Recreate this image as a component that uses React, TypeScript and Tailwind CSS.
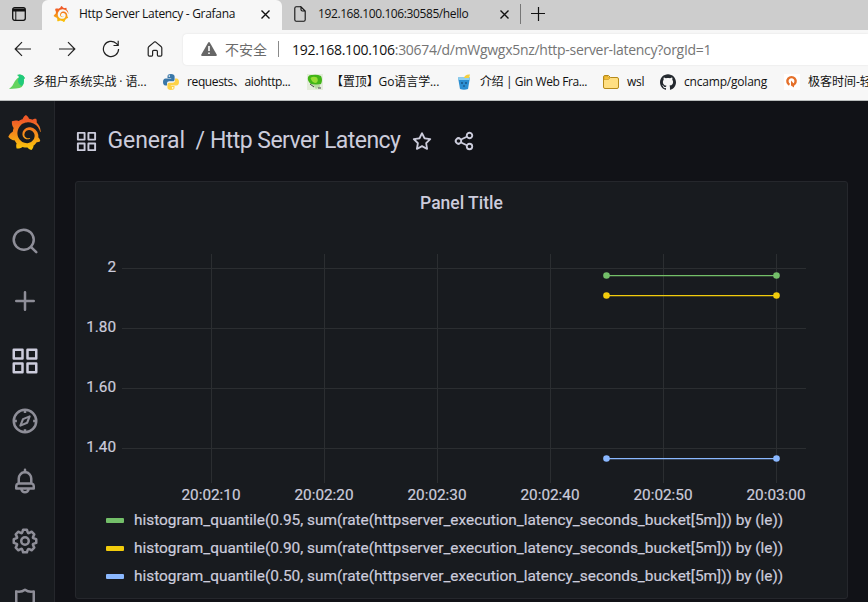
import React from "react";
import { SiGrafana, SiGithub } from "react-icons/si";

const PATHS = {
  search:
    "M21.71,20.29,18,16.61A9,9,0,1,0,16.61,18l3.68,3.68a1,1,0,0,0,1.42,0A1,1,0,0,0,21.71,20.29ZM11,18a7,7,0,1,1,7-7A7,7,0,0,1,11,18Z",
  plus: "M19,11H13V5a1,1,0,0,0-2,0v6H5a1,1,0,0,0,0,2h6v6a1,1,0,0,0,2,0V13h6a1,1,0,0,0,0-2Z",
  apps: "M10,13H3a1,1,0,0,0-1,1v7a1,1,0,0,0,1,1h7a1,1,0,0,0,1-1V14A1,1,0,0,0,10,13ZM9,20H4V15H9ZM21,2H14a1,1,0,0,0-1,1v7a1,1,0,0,0,1,1h7a1,1,0,0,0,1-1V3A1,1,0,0,0,21,2ZM20,9H15V4h5Zm1,4H14a1,1,0,0,0-1,1v7a1,1,0,0,0,1,1h7a1,1,0,0,0,1-1V14A1,1,0,0,0,21,13Zm-1,7H15V15h5ZM10,2H3A1,1,0,0,0,2,3v7a1,1,0,0,0,1,1h7a1,1,0,0,0,1-1V3A1,1,0,0,0,10,2ZM9,9H4V4H9Z",
  bell: "M18,13.18V10a6,6,0,0,0-5-5.91V3a1,1,0,0,0-2,0V4.09A6,6,0,0,0,6,10v3.18A3,3,0,0,0,4,16v2a1,1,0,0,0,1,1H8.14a4,4,0,0,0,7.72,0H19a1,1,0,0,0,1-1V16A3,3,0,0,0,18,13.18ZM8,10a4,4,0,0,1,8,0v3H8Zm4,10a2,2,0,0,1-1.72-1h3.44A2,2,0,0,1,12,20Zm6-3H6V16a1,1,0,0,1,1-1H17a1,1,0,0,1,1,1Z",
  cog: "M21.32,9.55l-1.89-.63.89-1.78A1,1,0,0,0,20.13,6L18,3.87a1,1,0,0,0-1.15-.19l-1.78.89-.63-1.89A1,1,0,0,0,13.5,2h-3a1,1,0,0,0-.95.68L8.92,4.57,7.14,3.68A1,1,0,0,0,6,3.87L3.87,6a1,1,0,0,0-.19,1.15l.89,1.78-1.89.63A1,1,0,0,0,2,10.5v3a1,1,0,0,0,.68.95l1.89.63-.89,1.78A1,1,0,0,0,3.87,18L6,20.13a1,1,0,0,0,1.15.19l1.78-.89.63,1.89a1,1,0,0,0,.95.68h3a1,1,0,0,0,.95-.68l.63-1.89,1.78.89A1,1,0,0,0,18,20.13L20.13,18a1,1,0,0,0,.19-1.15l-.89-1.78,1.89-.63A1,1,0,0,0,22,13.5v-3A1,1,0,0,0,21.32,9.55ZM20,12.78l-1.2.4A2,2,0,0,0,17.64,16l.57,1.14-1.1,1.1L16,17.64a2,2,0,0,0-2.79,1.16l-.4,1.2H11.22l-.4-1.2A2,2,0,0,0,8,17.64l-1.14.57-1.1-1.1L6.36,16A2,2,0,0,0,5.2,13.18L4,12.78V11.22l1.2-.4A2,2,0,0,0,6.36,8L5.79,6.89l1.1-1.1L8,6.36A2,2,0,0,0,10.82,5.2l.4-1.2h1.56l.4,1.2A2,2,0,0,0,16,6.36l1.14-.57,1.1,1.1L17.64,8a2,2,0,0,0,1.16,2.79l1.2.4ZM12,8a4,4,0,1,0,4,4A4,4,0,0,0,12,8Zm0,6a2,2,0,1,1,2-2A2,2,0,0,1,12,14Z",
  star: "M22,9.67A1,1,0,0,0,21.14,9l-5.69-.83L12.9,3a1,1,0,0,0-1.8,0L8.55,8.16,2.86,9a1,1,0,0,0-.81.68,1,1,0,0,0,.25,1l4.13,4-1,5.68A1,1,0,0,0,6.9,21.44L12,18.77l5.1,2.67a.93.93,0,0,0,.46.12,1,1,0,0,0,.59-.19,1,1,0,0,0,.4-1l-1-5.68,4.13-4A1,1,0,0,0,22,9.67Zm-6.15,4a1,1,0,0,0-.29.88l.72,4.19-3.76-2a1,1,0,0,0-.94,0l-3.76,2,.72-4.19a1,1,0,0,0-.29-.88l-3-3,4.21-.61a1,1,0,0,0,.76-.55L12,5.7l1.88,3.82a1,1,0,0,0,.76.55l4.21.61Z",
  share:
    "M18,14a4,4,0,0,0-3.08,1.48l-5.1-2.35a3.64,3.64,0,0,0,0-2.26l5.1-2.35A4,4,0,1,0,14,6a4.17,4.17,0,0,0,.07.71L8.79,9.14a4,4,0,1,0,0,5.72l5.28,2.43A4.17,4.17,0,0,0,14,18a4,4,0,1,0,4-4ZM18,4a2,2,0,1,1-2,2A2,2,0,0,1,18,4ZM6,14a2,2,0,1,1,2-2A2,2,0,0,1,6,14Zm12,6a2,2,0,1,1,2-2A2,2,0,0,1,18,20Z",
};

function Glyph({ d, className }: { d: string; className: string }) {
  return (
    <svg viewBox="0 0 24 24" className={`shrink-0 ${className}`} fill="currentColor">
      <path d={d} />
    </svg>
  );
}

function GrafanaLogo({ className }: { className: string }) {
  return <SiGrafana className={`shrink-0 ${className}`} fill="url(#grafana-flame)" />;
}

function TabStrip() {
  return (
    <div className="flex h-[30px] bg-[#cdcdcd] text-[12px]">
      <div className="flex w-[42px] items-center justify-center rounded-br bg-[#cdcdcd] pr-1 pb-[2px]">
        <svg width="14" height="14" viewBox="0 0 14 14" fill="none" stroke="#111">
          <rect x="0.7" y="0.7" width="12.6" height="12.6" rx="2" strokeWidth="1.3" />
          <path d="M1 2.2h12M1 3.7h12" strokeWidth="1.6" />
          <path d="M3.8 4v9" strokeWidth="1" />
        </svg>
      </div>
      <div className="flex w-[240px] items-center rounded-t-md bg-[#f7f7f7] pl-[11px] pb-[2px]">
        <GrafanaLogo className="size-4" />
        <span className="ml-[10px] w-[182px] whitespace-nowrap tracking-[-0.31px]">Http Server Latency - Grafana</span>
        <svg width="9" height="9" viewBox="0 0 9 9" stroke="#111" strokeWidth="1.4">
          <path d="M.5.5l8 8M8.500.5l-8 8" />
        </svg>
      </div>
      <div className="flex w-[238px] items-center pl-[12px] pb-[2px]">
        <svg width="12" height="16" viewBox="0 0 12 16" fill="none" stroke="#111" strokeWidth="1.1">
          <path d="M7 .8H2.200Q.8.800.8 2.200V13.800Q.8 15.200 2.200 15.200H9.800Q11.200 15.200 11.200 13.800V5L7 .8V3.600Q7 5 8.400 5H11.200" />
        </svg>
        <span className="ml-3 w-[182px] whitespace-nowrap tracking-[-0.4px]">192.168.100.106:30585/hello</span>
        <svg width="9" height="9" viewBox="0 0 9 9" stroke="#111" strokeWidth="1.4">
          <path d="M.5.5l8 8M8.500.5l-8 8" />
        </svg>
      </div>
      <div className="mt-1 h-[20px] w-px bg-[#777]" />
      <svg width="14" height="14" viewBox="0 0 14 14" className="mt-[7px] ml-[10px]" stroke="#111" strokeWidth="1.2">
        <path d="M7.500 0v14M0 6.500h14" />
      </svg>
    </div>
  );
}

function AddressBar() {
  return (
    <div className="flex h-[38px] items-center">
      <div className="flex w-[183px] items-center pl-[14px]">
        <svg width="18" height="16" viewBox="0 0 18 16" fill="none" stroke="#222" strokeWidth="1.2">
          <path d="M17 8H1.500M8 1.200L1.200 8L8 14.800" />
        </svg>
        <svg width="18" height="16" viewBox="0 0 18 16" className="ml-[26px]" fill="none" stroke="#222" strokeWidth="1.2">
          <path d="M1 8H16.500M10 1.200L16.800 8L10 14.800" />
        </svg>
        <svg width="18" height="18" viewBox="0 0 18 18" className="ml-[26px]" fill="none" stroke="#222" strokeWidth="1.2">
          <path d="M16.600 9A7.600 7.600 0 1 1 14.200 3.400L16 5.200M16.200 .8V5.500H11.500" />
        </svg>
        <svg width="16" height="16" viewBox="0 0 16 16" className="ml-[27px]" fill="none" stroke="#222" strokeWidth="1.200">
          <path d="M1.200 7Q1.200 6.300 1.700 5.800L7.200 1.100Q8 .5 8.800 1.100L14.300 5.800Q14.800 6.300 14.800 7V14Q14.800 15.200 13.600 15.200H11.400Q10.400 15.200 10.400 14V10.400Q10.400 9.400 9.400 9.400H6.600Q5.600 9.400 5.600 10.400V14Q5.600 15.200 4.600 15.200H2.400Q1.200 15.200 1.200 14Z" />
        </svg>
      </div>
      <div className="flex h-[31px] flex-1 items-center rounded-l-[4px] bg-white pl-[18px] shadow-[0_0_2px_#ddd]">
        <svg width="16" height="14" viewBox="0 0 16 14">
          <path d="M7.200.6Q8-.4 8.800.6L15.800 12.700Q16 14 15 14H1Q0 14 .2 12.700Z" fill="#666" />
          <path d="M8 4v5M8 10.500v1.500" stroke="#fff" strokeWidth="1.600" />
        </svg>
        <span className="ml-2 w-[53px] whitespace-nowrap text-[14px] text-[#6b6b6b]">不安全</span>
        <div className="h-4 w-px bg-[#8a8a8a]" />
        <span className="ml-[13px] whitespace-nowrap text-[14px] tracking-[-0.29px] text-[#757575]">
          <span className="text-[#111]">192.168.100.106</span>:30674/d/mWgwgx5nz/http-server-latency?orgId=1
        </span>
      </div>
    </div>
  );
}

function Bookmark({ icon, label, width, track }: { icon: React.ReactNode; label: string; width: string; track: string }) {
  return (
    <div className={`flex shrink-0 items-center ${width}`}>
      <div className="flex w-4 shrink-0 justify-center">{icon}</div>
      <span className={`ml-2 whitespace-nowrap ${track}`}>{label}</span>
    </div>
  );
}

function Bookmarks() {
  return (
    <div className="flex h-8 items-center overflow-hidden border-b border-[#b9bcbc] pb-[5px] pl-[9px] text-[12px] text-[#111]">
      <Bookmark
        width="w-[154px]"
        track="tracking-[-0.1px]"
        label="多租户系统实战 · 语..."
        icon={
          <svg width="16" height="16" viewBox="0 0 16 16">
            <path d="M0 15Q4 12 6 7Q8 4 10.500 3Q9 1 8 1Q12-.5 14.500 2L15.800 4L14.800 5.500Q16 14 7 14.500Z" fill="#64d35e" />
            <path d="M10 3Q9 1 8 1Q12-.5 14.500 2L15.800 4L14.800 5.500Q15.500 9 13 12Q7 9 10 3Z" fill="#20ca7c" />
          </svg>
        }
      />
      <Bookmark
        width="w-[144px]"
        track="tracking-[-0.37px]"
        label="requests、aiohttp..."
        icon={
          <svg width="16" height="16" viewBox="0 0 16 16">
            <path d="M8 0C5 0 4.500 1.200 4.500 2.400V4H8.200V4.600H2.500C1 4.600 0 5.800 0 8S1 11.500 2.300 11.500H4V9.500C4 8.200 5 7.300 6.200 7.300H9.800C11 7.300 11.600 6.500 11.600 5.400V2.400C11.600 1 10.400 0 8 0Z" fill="#3a77a8" />
            <path d="M8 16c3 0 3.500-1.200 3.500-2.400V12H7.800v-.6h5.700C15 11.400 16 10.200 16 8S15 4.500 13.700 4.500H12v2c0 1.300-1 2.200-2.200 2.200H6.200C5 8.700 4.400 9.500 4.400 10.600v3C4.400 15 5.600 16 8 16Z" fill="#fdd247" />
            <circle cx="6.300" cy="2.100" r=".8" fill="#fff" />
            <circle cx="9.700" cy="13.900" r=".8" fill="#fff" />
          </svg>
        }
      />
      <Bookmark
        width="w-[149px]"
        track="tracking-[-0.1px]"
        label="【置顶】Go语言学..."
        icon={
          <svg width="16" height="16" viewBox="0 0 16 16">
            <rect width="16" height="16" fill="#e4ecdc" />
            <path d="M1 3Q2 .5 5 1Q10 0 14 2Q16 6 14 10Q9 12 4 10Q0 7 1 3Z" fill="#42b518" />
            <path d="M3.500 4Q6 2 10 3.500Q12 7 9 9Q5 9 3.500 4Z" fill="#97dd35" />
            <path d="M5 10.500h8v2.500L9 15Z" fill="#b9d9a4" />
            <path d="M3 10l4 3M11 14h3" stroke="#444" />
          </svg>
        }
      />
      <Bookmark
        width="w-[147px]"
        track="tracking-[-0.4px]"
        label="介绍 | Gin Web Fra..."
        icon={
          <svg width="14" height="16" viewBox="0 0 14 16">
            <path d="M1 3.500H13L11 15Q7 16.500 3 15Z" fill="#2c8fd2" />
            <path d="M1 3.500H13L12.600 6H1.400Z" fill="#8fd0ee" />
            <path d="M7 4Q8 0 13 .5L12 4Z" fill="#f4cf3e" />
            <path d="M5 8v2M9 8v2M6 12h2" stroke="#174a75" strokeWidth="1.200" />
          </svg>
        }
      />
      <Bookmark
        width="w-[57px]"
        track="tracking-[-0.3px]"
        label="wsl"
        icon={
          <svg width="16" height="14" viewBox="0 0 16 14">
            <path d="M.5 2Q.5.500 2 .5H5.500L7.500 2.500H14Q15.500 2.500 15.500 4V12Q15.500 13.500 14 13.500H2Q.5 13.500.5 12Z" fill="#ffdf82" stroke="#b68a1a" />
            <path d="M1 4.500H5.500L7.500 2.500H5.500L4.500 1H2Q1 1 1 2Z" fill="#f4bd35" stroke="#b68a1a" strokeWidth=".5" />
          </svg>
        }
      />
      <Bookmark width="w-[124px]" track="tracking-[-0.2px]" label="cncamp/golang" icon={<SiGithub className="size-4 text-[#24292f]" />} />
      <Bookmark
        width="w-[90px]"
        track="tracking-[0px]"
        label="极客时间-轻"
        icon={
          <svg width="16" height="16" viewBox="0 0 16 16">
            <rect width="16" height="16" fill="#fff" />
            <path d="M5.500 10.800A4.100 4.100 0 1 1 9.500 10.800" fill="none" stroke="#e5702a" strokeWidth="2.400" />
            <path d="M7 6.500V11.500L10 13.500V10Z" fill="#e5702a" />
          </svg>
        }
      />
    </div>
  );
}

function Sidebar() {
  const cell = "flex h-[60px] shrink-0 items-center justify-center";
  return (
    <nav className="flex w-[55px] shrink-0 flex-col overflow-hidden border-r border-[#25272c] bg-[#181b1f] pr-1 text-[#8e8e98]">
      <div className="flex h-[110px] shrink-0 justify-center pt-[14px] pr-[2px]">
        <GrafanaLogo className="size-[35px]" />
      </div>
      <div className={cell}><Glyph d={PATHS.search} className="size-[30px]" /></div>
      <div className={cell}><Glyph d={PATHS.plus} className="size-[30px]" /></div>
      <div className={cell}><Glyph d={PATHS.apps} className="size-[30px] text-[#ccccdc]" /></div>
      <div className={cell}>
        <svg viewBox="0 0 24 24" className="size-[30px]" fill="none" stroke="currentColor" strokeWidth="2">
          <circle cx="12" cy="12" r="9" />
          <path d="M12 3v2.500M12 18.500V21M3 12h2.500M18.500 12H21" />
          <path d="M15.700 8.300L13.700 13.400L8.300 15.700L10.400 10.500Z" strokeWidth="1.700" strokeLinejoin="round" />
        </svg>
      </div>
      <div className={cell}><Glyph d={PATHS.bell} className="size-[30px]" /></div>
      <div className={cell}><Glyph d={PATHS.cog} className="size-[30px]" /></div>
      <div className={cell}>
        <svg viewBox="0 0 24 24" className="size-[30px]" fill="none" stroke="currentColor" strokeWidth="2" strokeLinejoin="round">
          <path d="M12 3Q9 5.200 5 4.300V12Q5 17 12 21Q19 17 19 12V4.300Q15 5.200 12 3Z" />
        </svg>
      </div>
    </nav>
  );
}

const SERIES = [
  { q: "0.95", color: "#73bf69", y: 275.5 },
  { q: "0.90", color: "#f2cc0c", y: 295.5 },
  { q: "0.50", color: "#8ab8ff", y: 458.5 },
];
const TICKS_X = [
  { x: 211, label: "20:02:10" },
  { x: 324, label: "20:02:20" },
  { x: 437, label: "20:02:30" },
  { x: 550, label: "20:02:40" },
  { x: 663, label: "20:02:50" },
  { x: 776, label: "20:03:00" },
];
const TICKS_Y = [
  { y: 268, label: "2" },
  { y: 328, label: "1.80" },
  { y: 388, label: "1.60" },
  { y: 448, label: "1.40" },
];

function Chart() {
  return (
    <svg width="771" height="282" viewBox="76 224 771 282" className="block shrink-0" fontSize="15.3" fontFamily="Roboto, sans-serif" fill="#ccccdc">
      <g fill="#2b2e31">
        {TICKS_Y.map((t) => (
          <rect key={t.y} x="122" y={t.y} width="684" height="1" />
        ))}
        {TICKS_X.map((t) => (
          <rect key={t.x} x={t.x} y="254" width="1" height="229" />
        ))}
      </g>
      <g stroke="#ccccdc" strokeWidth="0.200">
        {TICKS_Y.map((t) => (
          <text key={t.y} x="116" y={t.y + 4} textAnchor="end">{t.label}</text>
        ))}
        {TICKS_X.map((t) => (
          <text key={t.x} x={t.x} y="500" textAnchor="middle">{t.label}</text>
        ))}
      </g>
      {SERIES.map((s) => (
        <g key={s.q} fill={s.color}>
          <path d={`M606.500 ${s.y}H776.500`} stroke={s.color} strokeWidth="1.250" />
          <circle cx="606.500" cy={s.y} r="3.300" />
          <circle cx="776.500" cy={s.y} r="3.300" />
        </g>
      ))}
    </svg>
  );
}

function Dashboard() {
  return (
    <main className="flex flex-1 flex-col bg-[#111217] pl-5 pr-[20px] font-[Roboto,sans-serif] text-[#ccccdc]">
      <header className="flex h-[80px] shrink-0 items-center text-[23px]">
        <Glyph d={PATHS.apps} className="size-[23px]" />
        <span className="ml-[9.5px] w-[88px] whitespace-nowrap tracking-[-0.1px]">General</span>
        <span className="w-[14.500px]">/</span>
        <span className="w-[200.5px] whitespace-nowrap tracking-[-0.55px]">Http Server Latency</span>
        <Glyph d={PATHS.star} className="size-[22px]" />
        <Glyph d={PATHS.share} className="ml-[20.5px] size-[22px]" />
      </header>
      <section className="flex h-[418px] w-[773px] shrink-0 flex-col rounded-[3px] border border-[#25272c] bg-[#181b1f]">
        <h2 className="h-[42px] text-center text-[17.500px] font-medium leading-[42px]">Panel Title</h2>
        <Chart />
        <ul className="flex flex-col pl-[30px] text-[15.4px] [-webkit-text-stroke:0.2px]">
          {SERIES.map((s) => (
            <li key={s.q} className="flex h-7 items-center">
              <span className="mr-[10px] h-[5px] w-[18px] rounded-[1px]" style={{ backgroundColor: s.color }} />
              <span className="leading-6 whitespace-nowrap">
                {`histogram_quantile(${s.q}, sum(rate(httpserver_execution_latency_seconds_bucket[5m])) by (le))`}
              </span>
            </li>
          ))}
        </ul>
      </section>
    </main>
  );
}

export default function App() {
  return (
    <div className="flex h-[602px] w-[868px] flex-col overflow-hidden bg-[#111217]">
      <svg width="0" height="0" className="absolute">
        <defs>
          <linearGradient id="grafana-flame" x1="0" y1="0" x2="0" y2="1">
            <stop offset="0.150" stopColor="#f05a28" />
            <stop offset="1" stopColor="#fbca0a" />
          </linearGradient>
        </defs>
      </svg>
      <div className="shrink-0 bg-[#f7f7f7] font-['Open_Sans','Noto_Sans_CJK_SC',sans-serif] text-[#111]">
        <TabStrip />
        <AddressBar />
        <div className="h-px" />
        <Bookmarks />
      </div>
      <div className="flex min-h-0 flex-1">
        <Sidebar />
        <Dashboard />
      </div>
    </div>
  );
}
